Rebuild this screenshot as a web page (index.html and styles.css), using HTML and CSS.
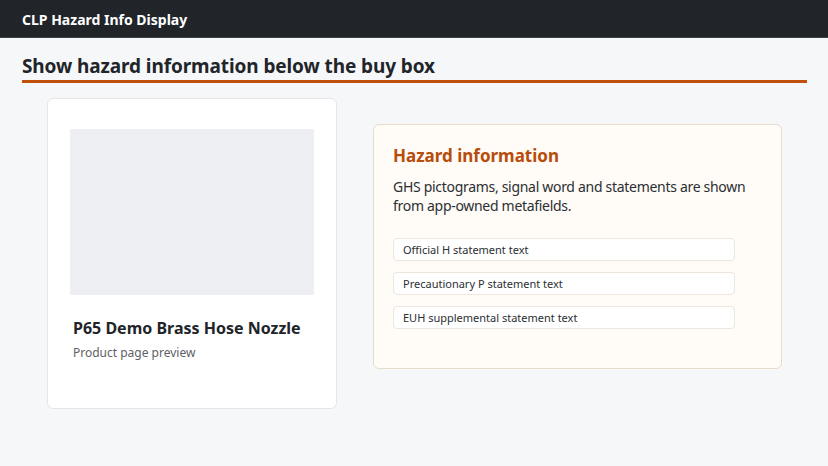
FILE: index.html
```html
<!DOCTYPE html>
<html lang="en">
<head>
    <meta charset="UTF-8">
    <meta name="viewport" content="width=device-width, initial-scale=1.0">
    <title>CLP Hazard Info Display</title>
    <link rel="stylesheet" href="styles.css">
</head>
<body>
    <header class="topbar">CLP Hazard Info Display</header>

    <main class="page">
        <h1 class="page-title">Show hazard information below the buy box</h1>

        <div class="preview">
            <div class="product-card">
                <div class="product-image"></div>
                <h2 class="product-name">P65 Demo Brass Hose Nozzle</h2>
                <p class="product-sub">Product page preview</p>
            </div>

            <section class="hazard-box">
                <h3 class="hazard-title">Hazard information</h3>
                <p class="hazard-text">GHS pictograms, signal word and statements are shown from app-owned metafields.</p>
                <div class="statement">Official H statement text</div>
                <div class="statement">Precautionary P statement text</div>
                <div class="statement">EUH supplemental statement text</div>
            </section>
        </div>
    </main>
</body>
</html>
```

FILE: styles.css
```css
body {
    margin: 0;
    font-family: "Noto Sans", "Open Sans", sans-serif;
    background-color: #f6f7f9;
    color: #212529;
}

.topbar {
    background-color: #212529;
    color: #fff;
    font-size: 14px;
    font-weight: 700;
    height: 38px;
    line-height: 40px;
    padding: 0 22px;
    border-bottom: 1px solid #3a3f45;
    box-sizing: border-box;
}

.page {
    padding: 0 21px 0 22px;
}

.page-title {
    font-size: 19px;
    font-weight: 700;
    margin: 15px 0 0;
    padding-bottom: 1px;
    line-height: 26px;
    letter-spacing: -0.1px;
    border-bottom: 3px solid #c2500a;
}

.preview {
    display: grid;
    grid-template-columns: 290px 409px;
    gap: 36px;
    padding: 15px 25px;
    align-items: start;
}

.product-card {
    background-color: #fff;
    border: 1px solid #e4e6ea;
    border-radius: 6px;
    padding: 30px 22px 0;
    height: 311px;
    box-sizing: border-box;
}

.product-image {
    height: 166px;
    background-color: #eeeff2;
}

.product-name {
    font-size: 16px;
    font-weight: 700;
    margin: 22px 0 0 3px;
    line-height: 22px;
}

.product-sub {
    font-size: 12px;
    color: #5d6166;
    margin: 5px 0 0 3px;
}

.hazard-box {
    margin-top: 26px;
    background-color: #fffbf6;
    border: 1px solid #e7dccc;
    border-radius: 6px;
    padding: 20px 20px 39px 19px;
}

.hazard-title {
    font-size: 17px;
    font-weight: 700;
    color: #b84c0a;
    margin: 0;
    line-height: 22px;
}

.hazard-text {
    font-size: 14px;
    line-height: 19px;
    letter-spacing: -0.3px;
    margin: 10px 0 23px;
    color: #2b2f33;
}

.statement {
    max-width: 342px;
    box-sizing: border-box;
    background-color: #fff;
    border: 1px solid #ece6dc;
    border-radius: 4px;
    font-size: 11px;
    line-height: 21px;
    padding: 0 9px;
    margin-top: 11px;
    color: #2b2f33;
}

.statement:first-of-type {
    margin-top: 0;
}
```
